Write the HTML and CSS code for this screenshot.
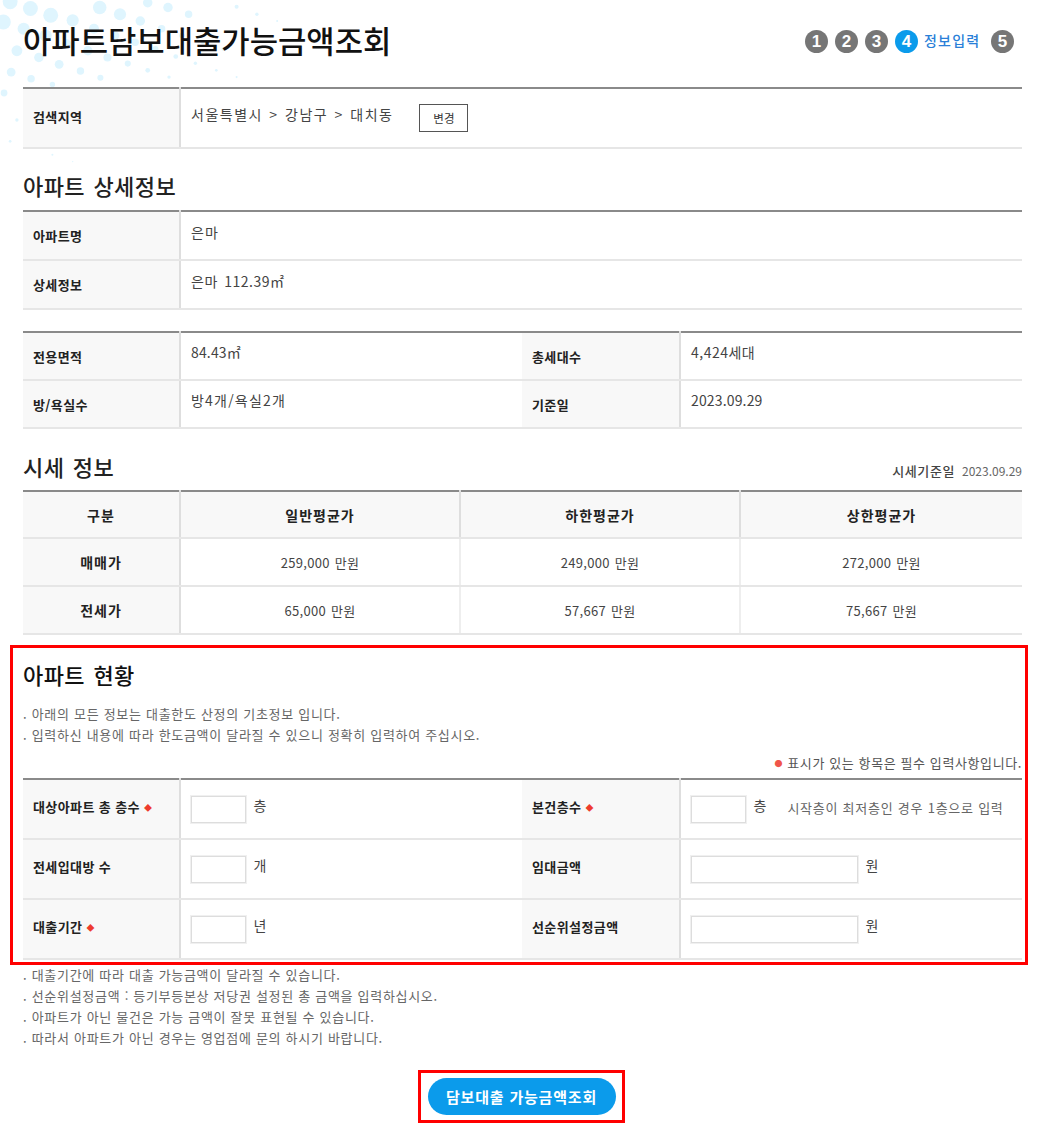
FILE: index.html
```html
<!DOCTYPE html>
<html lang="ko">
<head>
<meta charset="utf-8">
<title>아파트담보대출가능금액조회</title>
<link rel="stylesheet" href="styles.css">
</head>
<body>
<svg class="dots" viewBox="0 0 1568 621" aria-hidden="true">
<circle cx="90" cy="25" r="22"/><circle cx="150" cy="45" r="22"/><circle cx="215" cy="60" r="18"/><circle cx="295" cy="22" r="20"/><circle cx="355" cy="42" r="18"/><circle cx="415" cy="62" r="14"/><circle cx="497" cy="22" r="14"/><circle cx="558" cy="42" r="11"/><circle cx="437" cy="8" r="14"/><circle cx="30" cy="5" r="22"/><circle cx="10" cy="65" r="22"/><circle cx="70" cy="85" r="18"/><circle cx="135" cy="105" r="18"/><circle cx="50" cy="150" r="16"/><circle cx="115" cy="170" r="14"/><circle cx="175" cy="190" r="13"/><circle cx="238" cy="210" r="11"/><circle cx="297" cy="230" r="9"/><circle cx="33" cy="213" r="13"/><circle cx="92" cy="233" r="11"/><circle cx="155" cy="250" r="8"/><circle cx="12" cy="275" r="10"/><circle cx="378" cy="188" r="9"/><circle cx="437" cy="208" r="7"/><circle cx="500" cy="228" r="5"/><circle cx="318" cy="170" r="12"/><circle cx="260" cy="150" r="14"/><circle cx="197" cy="130" r="14"/><circle cx="278" cy="85" r="15"/><circle cx="340" cy="105" r="13"/><circle cx="400" cy="125" r="11"/><circle cx="460" cy="145" r="9"/><circle cx="520" cy="167" r="7"/><circle cx="578" cy="187" r="5"/><circle cx="640" cy="208" r="4"/><circle cx="700" cy="228" r="3"/><circle cx="478" cy="85" r="11"/><circle cx="538" cy="105" r="8"/><circle cx="600" cy="125" r="6"/><circle cx="660" cy="145" r="5"/><circle cx="700" cy="20" r="6"/><circle cx="760" cy="42" r="5"/><circle cx="820" cy="62" r="3"/><circle cx="50" cy="355" r="5"/><circle cx="110" cy="375" r="4"/><circle cx="30" cy="418" r="4"/><circle cx="155" cy="458" r="3"/><circle cx="215" cy="478" r="2"/>
</svg>
<main class="page">
  <header class="top">
    <h1 class="title">아파트담보대출가능금액조회</h1>
    <ol class="steps">
      <li class="step">1</li>
      <li class="step">2</li>
      <li class="step">3</li>
      <li class="step step-on">4</li>
      <li class="step-name">정보입력</li>
      <li class="step step-last">5</li>
    </ol>
  </header>

  <table class="grid t-region">
    <tr><th class="w157">검색지역</th><td><span class="region">서울특별시 &gt; 강남구 &gt; 대치동</span><button class="change" type="button">변경</button></td></tr>
  </table>

  <h2 class="h2 h-detail">아파트 상세정보</h2>
  <table class="grid r49">
    <tr><th class="w157">아파트명</th><td class="ko">은마</td></tr>
    <tr><th>상세정보</th><td>은마 112.39㎡</td></tr>
  </table>

  <table class="grid r49 t-four">
    <colgroup><col class="w157"><col class="w342"><col class="w158"><col></colgroup>
    <tr><th>전용면적</th><td class="num">84.43㎡</td><th>총세대수</th><td>4,424세대</td></tr>
    <tr><th>방/욕실수</th><td class="ko">방4개/욕실2개</td><th>기준일</th><td class="num">2023.09.29</td></tr>
  </table>

  <div class="price-head">
    <h2 class="h2">시세 정보</h2>
    <p class="base"><b>시세기준일</b><span>2023.09.29</span></p>
  </div>
  <table class="grid prices">
    <colgroup><col class="w157"><col class="w280"><col class="w280"><col></colgroup>
    <tr class="head-row"><th class="head">구분</th><th class="head">일반평균가</th><th class="head">하한평균가</th><th class="head">상한평균가</th></tr>
    <tr><th>매매가</th><td>259,000 만원</td><td>249,000 만원</td><td>272,000 만원</td></tr>
    <tr><th>전세가</th><td>65,000 만원</td><td>57,667 만원</td><td>75,667 만원</td></tr>
  </table>

  <section class="status">
    <h2 class="h2 h-status">아파트 현황</h2>
    <ul class="notes notes-top">
      <li>아래의 모든 정보는 대출한도 산정의 기초정보 입니다.</li>
      <li>입력하신 내용에 따라 한도금액이 달라질 수 있으니 정확히 입력하여 주십시오.</li>
    </ul>
    <p class="required"><i class="mark">●</i> 표시가 있는 항목은 필수 입력사항입니다.</p>
    <table class="grid r60">
      <colgroup><col class="w157"><col class="w342"><col class="w158"><col></colgroup>
      <tr>
        <th>대상아파트 총 층수 <i class="plus">◆</i></th>
        <td><input class="field small" type="text"><span class="unit">층</span></td>
        <th>본건층수 <i class="plus">◆</i></th>
        <td><input class="field small" type="text"><span class="unit">층</span><span class="hint">시작층이 최저층인 경우 1층으로 입력</span></td>
      </tr>
      <tr>
        <th>전세입대방 수</th>
        <td><input class="field small" type="text"><span class="unit">개</span></td>
        <th>임대금액</th>
        <td><input class="field wide" type="text"><span class="unit">원</span></td>
      </tr>
      <tr>
        <th>대출기간 <i class="plus">◆</i></th>
        <td><input class="field small" type="text"><span class="unit">년</span></td>
        <th>선순위설정금액</th>
        <td><input class="field wide" type="text"><span class="unit">원</span></td>
      </tr>
    </table>
  </section>

  <ul class="notes notes-bottom">
    <li>대출기간에 따라 대출 가능금액이 달라질 수 있습니다.</li>
    <li>선순위설정금액 : 등기부등본상 저당권 설정된 총 금액을 입력하십시오.</li>
    <li>아파트가 아닌 물건은 가능 금액이 잘못 표현될 수 있습니다.</li>
    <li>따라서 아파트가 아닌 경우는 영업점에 문의 하시기 바랍니다.</li>
  </ul>

  <div class="action">
    <div class="action-box"><button class="submit" type="button">담보대출 가능금액조회</button></div>
  </div>
</main>
</body>
</html>
```

FILE: styles.css
```css
* { box-sizing: border-box; }
html, body { margin: 0; padding: 0; background: #fff; }
body {
  position: relative;
  width: 1060px;
  height: 1125px;
  overflow: hidden;
  font-family: "Noto Sans CJK KR", "Noto Sans", sans-serif;
  color: #444;
  font-size: 13px;
}
.dots { position: absolute; left: 0; top: 0; width: 530px; height: 210px; fill: #dff5fe; }
.page { position: relative; padding: 0 38px 0 23px; }

.top { height: 87px; display: flex; justify-content: space-between; align-items: flex-start; }
.title { margin: 17px 0 0; font-size: 30.8px; line-height: 46px; font-weight: 500; color: #111; }
.steps { list-style: none; margin: 30px 8px 0 0; padding: 0; display: flex; align-items: center; }
.step {
  width: 23px; height: 23px; margin-right: 7px; border-radius: 50%;
  background: #767676; color: #fff; text-align: center;
  font: bold 17px/23px "Liberation Sans", sans-serif;
}
.step-last { margin-right: 0; }
.step-on { background: #0b9beb; margin-right: 6px; }
.step-name { width: 67px; margin-top: -4px; color: #2a7fd8; font-size: 14px; letter-spacing: 1.2px; font-weight: 500; white-space: nowrap; }

.grid { width: 100%; table-layout: fixed; border-collapse: collapse; border-top: 2px solid #8a8a8a; }
.grid th, .grid td { border-bottom: 2px solid #e6e6e6; padding: 0; }
.grid th {
  background: #f8f8f8; border-right: 2px solid #dedede; padding-left: 10px;
  text-align: left; font-weight: 700; font-size: 13px; letter-spacing: .4px; color: #222;
}
.grid td { padding-left: 10px; color: #444; font-size: 14px; letter-spacing: .5px; word-spacing: 2px; }
.grid td.ko { letter-spacing: 1.2px; }
.grid td.num { letter-spacing: .15px; }
.w157 { width: 157px; }
.w158 { width: 158px; }
.w280 { width: 280px; }
.w342 { width: 342px; }

.t-region tr { height: 60px; }
.t-region th { padding-bottom: 4px; }
.region { position: relative; top: -3px; letter-spacing: 1.5px; word-spacing: 1px; }
.change {
  width: 49px; height: 28px; margin-left: 26px; padding: 0;
  border: 1px solid #555; background: #fff; color: #333;
  font-family: inherit; font-size: 11.5px; letter-spacing: 0;
}

.h2 { margin: 0; font-size: 22px; line-height: 30px; font-weight: 500; color: #222; letter-spacing: .4px; word-spacing: 2px; }
.h-detail { padding-top: 21px; height: 61px; }
.r49 tr { height: 49px; }
.r49 td { padding-bottom: 8px; }
.t-four { margin-top: 21px; }
.t-four tr { height: 48px; }

.price-head { height: 61px; padding-top: 22px; display: flex; justify-content: space-between; }
.base { margin: 0; padding-top: 10px; display: flex; gap: 7px; font-size: 13px; color: #555; line-height: 20px; }
.base b { font-weight: 500; color: #444; letter-spacing: .6px; }
.base span { font-size: 12px; color: #666; }

.prices tr { height: 48px; }
.prices .head-row { height: 47px; }
.prices th { padding: 0; text-align: center; font-size: 14px; letter-spacing: 1px; }
.prices td { padding: 0; text-align: center; border-right: 2px solid #eee; font-size: 13px; letter-spacing: .3px; word-spacing: 1px; }
.prices td:last-child { border-right: 0; }
.prices .head { border-right: 2px solid #dedede; }
.prices .head:last-child { border-right: 0; }

.status {
  margin: 10px -6px 0 -13px; height: 320px;
  border: 3px solid #f00; padding: 0 3px 0 10px;
}
.h-status { padding-top: 11px; height: 55px; color: #111; }
.notes { list-style: none; margin: 0; padding: 0; color: #666; font-size: 13px; letter-spacing: .7px; }
.notes li::before { content: ". "; }
.notes-top li { height: 21px; line-height: 21px; }
.required { margin: 7px 0 0; height: 26px; line-height: 22px; text-align: right; font-size: 13px; letter-spacing: .6px; color: #555; }
.mark { font-style: normal; color: #f0554a; font-size: 8px; vertical-align: 1px; }
.plus { font-style: normal; color: #ee3b2e; font-size: 8px; vertical-align: 1px; }
.r60 tr { height: 60px; }
.r60 th { padding-bottom: 6px; }
.r60 td { color: #444; white-space: nowrap; }
.field { height: 27px; border: 1px solid #ddd; background: #fff; vertical-align: middle; padding: 0; margin: 0; box-shadow: 0 0 0 1px #f0f0f0; }
.small { width: 55px; }
.wide { width: 167px; }
.unit { display: inline-block; margin-left: 7.5px; font-size: 14px; letter-spacing: 0; vertical-align: 3px; }
.hint { margin-left: 21px; color: #666; font-size: 13px; letter-spacing: .75px; word-spacing: 0; vertical-align: 1px; }

.notes-bottom { margin-top: -1px; }
.notes-bottom li { height: 21px; line-height: 21px; }
.action { margin-top: 22px; display: flex; justify-content: center; padding-right: 2px; }
.action-box { width: 207px; height: 53px; border: 3px solid #f00; display: flex; align-items: center; justify-content: center; }
.submit {
  width: 188px; height: 37px; border: 0; border-radius: 19px;
  background: #0b9beb; color: #fff; font-family: inherit; font-size: 15px; letter-spacing: .8px; font-weight: 700;
}
```
